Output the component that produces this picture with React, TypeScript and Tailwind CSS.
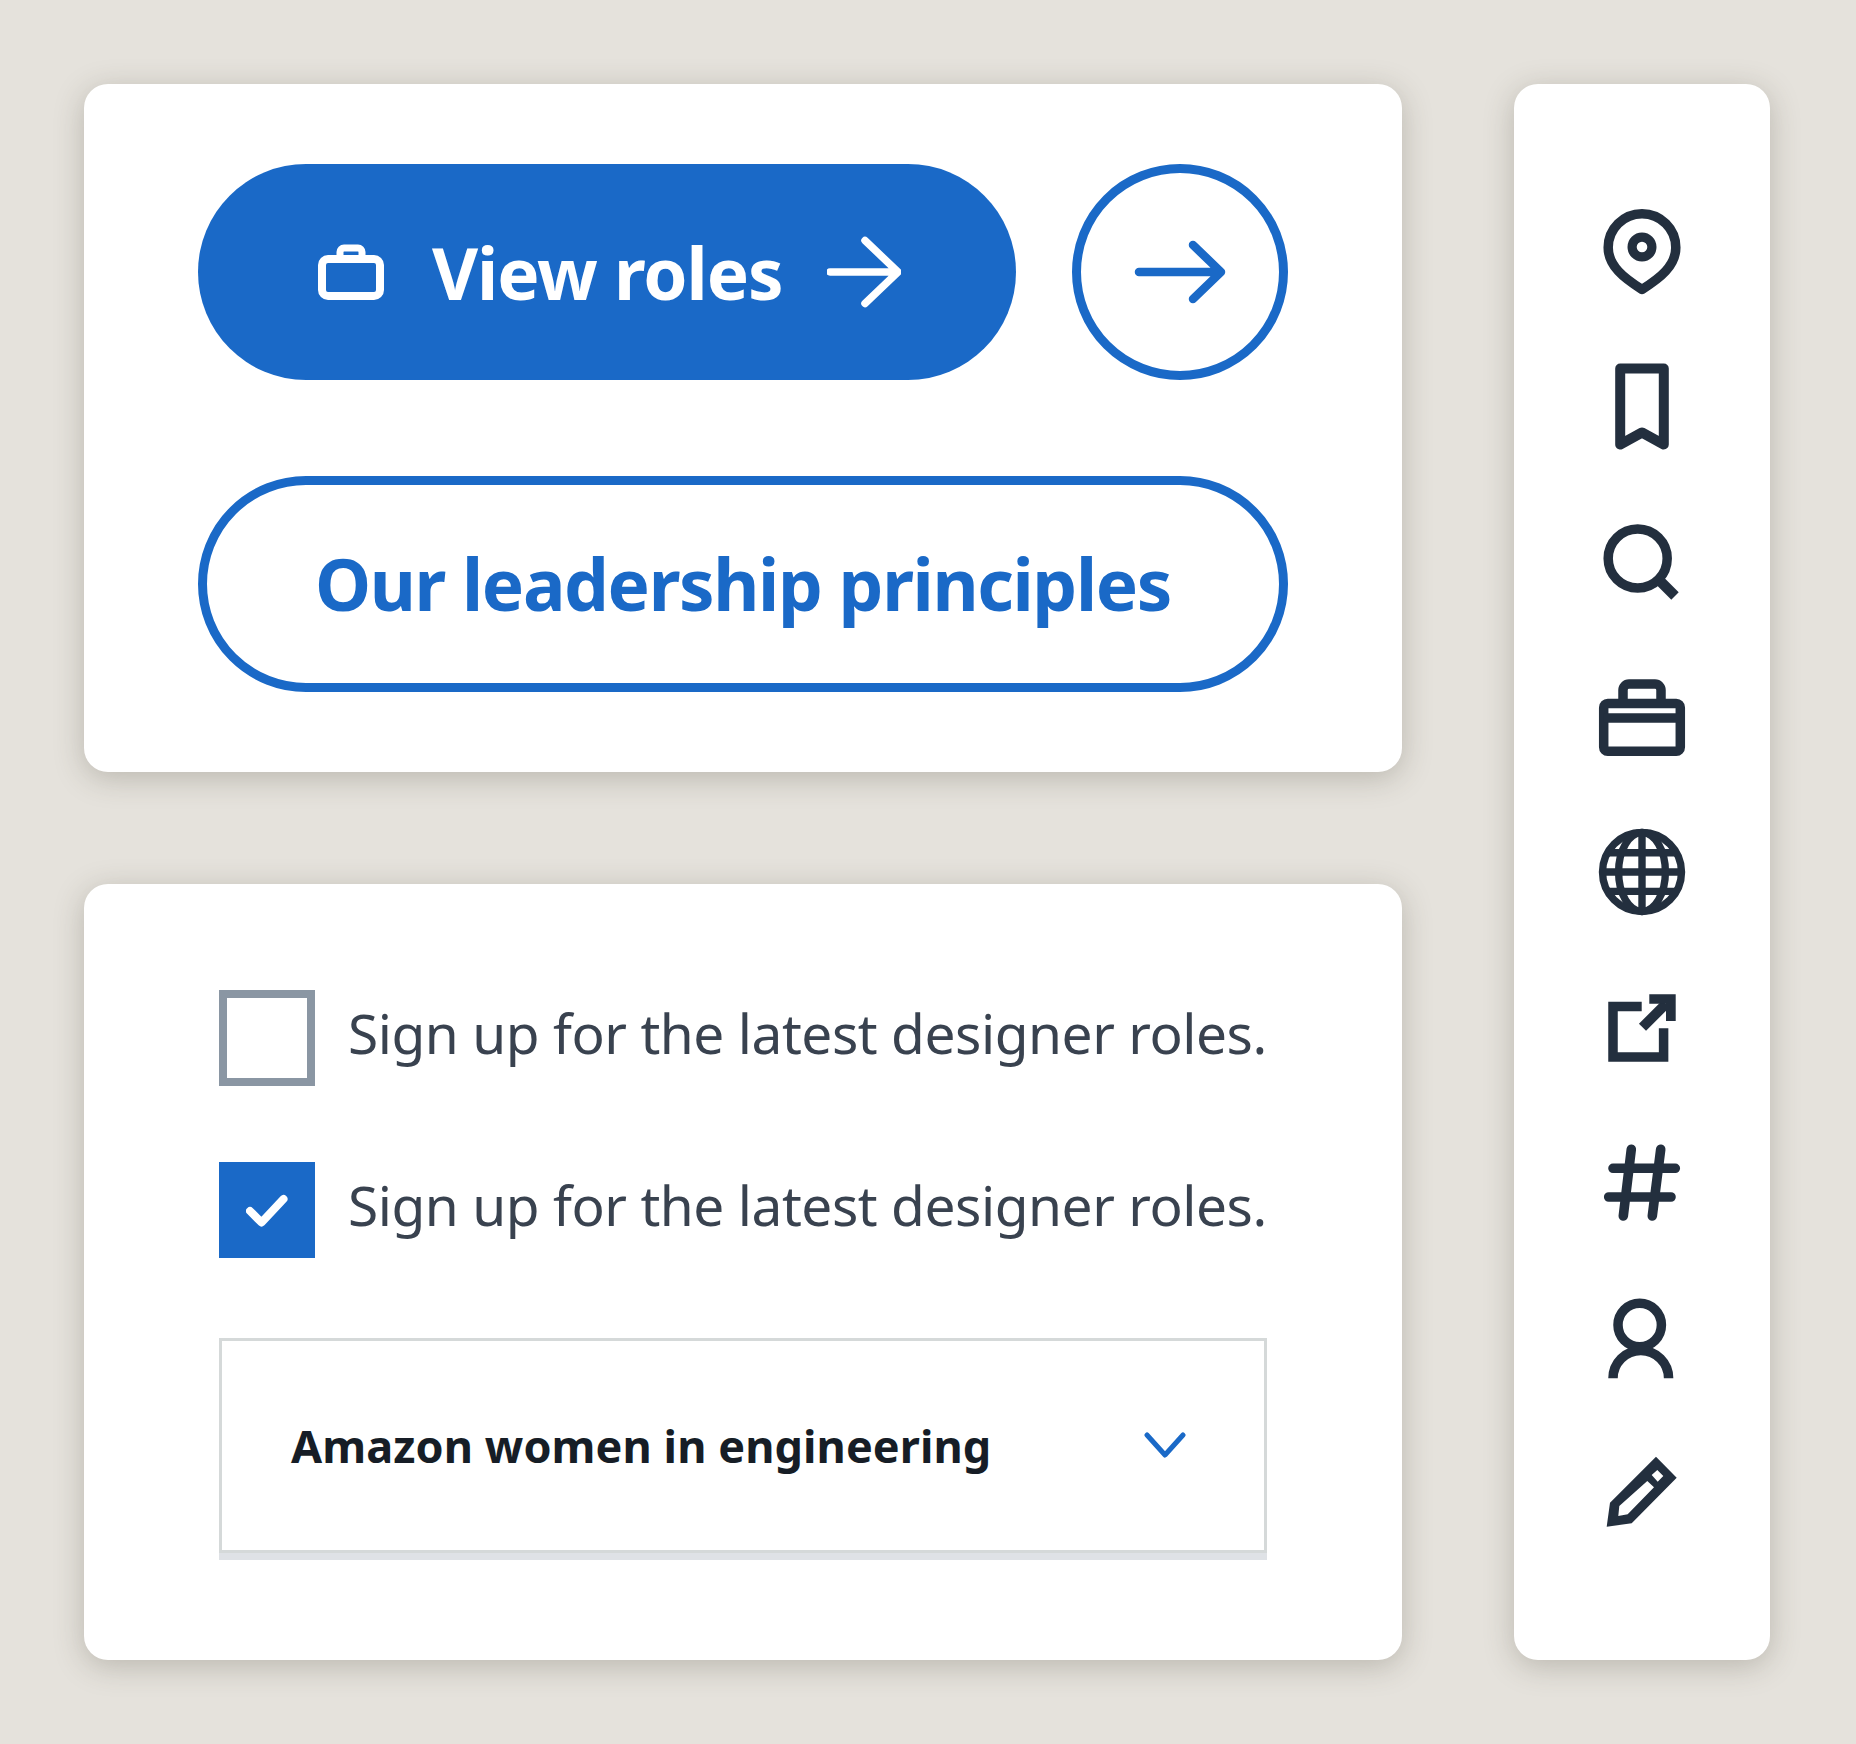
const DARK = "#232f3e";

function Icon({ children }: { children: React.ReactNode }) {
  return (
    <svg width="96" height="96" viewBox="0 0 96 96" fill="none" stroke={DARK} strokeWidth="9.5" className="block shrink-0">
      {children}
    </svg>
  );
}

const icons = [
  <Icon key="pin">
    <path d="M48 85.5C30 74 14.2 62 14.2 43.5A33.8 33.8 0 0 1 81.8 43.5C81.8 62 66 74 48 85.5Z" strokeLinejoin="round" />
    <circle cx="48" cy="43" r="9.9" strokeWidth="9.2" />
  </Icon>,
  <Icon key="bookmark">
    <path d="M26.2 9.5H69.8V85.5L48 73.5 26.2 85.5Z" strokeLinejoin="round" strokeWidth="10" />
  </Icon>,
  <Icon key="search">
    <circle cx="43.7" cy="44.5" r="29.5" />
    <path d="M65 66L81 82" strokeWidth="10.5" />
  </Icon>,
  <Icon key="briefcase">
    <rect x="9.7" y="34.5" width="76.6" height="47.8" rx="4" />
    <path d="M9.7 49H86.3" />
    <path d="M29 32V21a6 6 0 0 1 6-6H61a6 6 0 0 1 6 6V32" />
  </Icon>,
  <Icon key="globe">
    <g strokeWidth="7.4">
      <circle cx="48" cy="48" r="39.5" />
      <ellipse cx="48" cy="48" rx="23.4" ry="39.5" />
      <path d="M48 8V88M10 48H86M15 28.7H81M15 67.4H81" />
    </g>
  </Icon>,
  <Icon key="external">
    <path d="M47.7 27.4H19V78H69.6V49.3" />
    <path d="M72 24.7L48.5 48.3" strokeWidth="10" />
    <path d="M55.3 15.3H81.7V42H72V24.7H55.3Z" fill={DARK} stroke="none" />
  </Icon>,
  <Icon key="hash">
    <g strokeWidth="9.6" strokeLinecap="round">
      <path d="M19 34.3H81.3M14.7 63H77M37.3 15.3L29.3 82M66.7 15.3L58.3 82" />
    </g>
  </Icon>,
  <Icon key="user">
    <circle cx="45.7" cy="36" r="21.7" />
    <path d="M19 89.3A27.8 27.8 0 0 1 74.6 89.3" />
  </Icon>,
  <Icon key="pencil">
    <path
      fillRule="evenodd"
      fill={DARK}
      stroke="none"
      d="M12.7 82.7L16 58.7 62 12.7 82.7 33.7 37.7 79.3ZM24.3 72L33.7 70.3 60 43.3 53.3 37 25.3 62ZM57.7 31L63.7 37.7 69.3 32 63.3 26Z"
    />
  </Icon>,
];

function Row({ checked }: { checked?: boolean }) {
  return (
    <div className="flex items-center gap-[33px]">
      {checked ? (
        <span className="flex h-[96px] w-[96px] shrink-0 items-center justify-center bg-[#1a69c7]">
          <svg width="42" height="34" viewBox="0 0 42 34" fill="none" stroke="#fff" strokeWidth="8" strokeLinecap="round" strokeLinejoin="round" className="relative top-[1px]">
            <path d="M4 17L15.5 28.5 37.5 5" />
          </svg>
        </span>
      ) : (
        <span className="block h-[96px] w-[96px] shrink-0 border-[8px] border-[#8a96a3] bg-white" />
      )}
      <span className="relative top-[-5px] whitespace-nowrap text-[55px] leading-[70px] tracking-[-0.45px] text-[#39424f]">
        Sign up for the latest designer roles.
      </span>
    </div>
  );
}

export default function App() {
  return (
    <div className="flex min-h-[1744px] items-start gap-[112px] bg-[#e5e2dc] pl-[84px] pt-[84px] font-['Noto_Sans','Open_Sans',sans-serif]">
      <div className="flex w-[1318px] flex-col gap-[112px]">
        <section className="rounded-[24px] bg-white px-[114px] py-[80px] shadow-[0_6px_30px_rgba(70,65,50,0.27)]">
          <div className="flex gap-[56px]">
            <button className="flex h-[216px] w-[818px] items-center rounded-full bg-[#1a69c7] pl-[120px] text-white">
              <svg width="66" height="56" viewBox="0 0 66 56" fill="none" stroke="#fff" strokeWidth="8" className="shrink-0">
                <rect x="4" y="15" width="58" height="37" rx="6" />
                <path d="M22 14V8a4 4 0 0 1 4-4H40a4 4 0 0 1 4 4V14" strokeWidth="7" />
              </svg>
              <span className="relative top-[1px] ml-[48px] whitespace-nowrap text-[71px] font-bold leading-[90px] tracking-[-1.1px]">View roles</span>
              <svg width="74" height="72" viewBox="0 0 74 72" fill="none" stroke="#fff" strokeWidth="7.5" strokeLinecap="round" strokeLinejoin="round" className="ml-[45px] shrink-0">
                <path d="M3 36H70M38 4.5L71 36 38 67.5" />
              </svg>
            </button>
            <button className="flex h-[216px] w-[216px] items-center justify-center rounded-full border-[9px] border-[#1a69c7] bg-white">
              <svg width="92" height="66" viewBox="0 0 92 66" fill="none" stroke="#1a69c7" strokeWidth="8.5" strokeLinecap="round" strokeLinejoin="round">
                <path d="M5 33H86M59 6L87 33 59 60" />
              </svg>
            </button>
          </div>
          <button className="mt-[96px] flex h-[216px] w-[1090px] items-center justify-center rounded-full border-[9px] border-[#1a69c7] bg-white text-[71px] font-bold leading-[90px] tracking-[-1.35px] text-[#1a69c7]">
            <span>Our leadership principles</span>
          </button>
        </section>

        <section className="rounded-[24px] bg-white pb-[107px] pl-[135px] pr-[135px] pt-[106px] shadow-[0_6px_30px_rgba(70,65,50,0.27)]">
          <div className="flex flex-col gap-[76px]">
            <Row />
            <Row checked />
          </div>
          <div className="mt-[80px] flex h-[215px] w-[1048px] items-center justify-between border-[3px] border-[#d5d9d9] pl-[69px] pr-[78px] shadow-[0_7px_0_#dfe2e6]">
            <span className="whitespace-nowrap text-[45px] font-bold leading-[60px] tracking-[0.08px] text-[#161d26]">
              Amazon women in engineering
            </span>
            <svg width="42" height="26" viewBox="0 0 42 26" fill="none" stroke="#1a69c7" strokeWidth="5" strokeLinecap="round" strokeLinejoin="round" className="relative top-[-1px]">
              <path d="M3 3L21 23 39 3" />
            </svg>
          </div>
        </section>
      </div>

      <aside className="flex h-[1576px] w-[256px] flex-col items-center gap-[59px] rounded-[24px] bg-white pt-[120px] shadow-[0_6px_30px_rgba(70,65,50,0.27)]">
        {icons}
      </aside>
    </div>
  );
}
